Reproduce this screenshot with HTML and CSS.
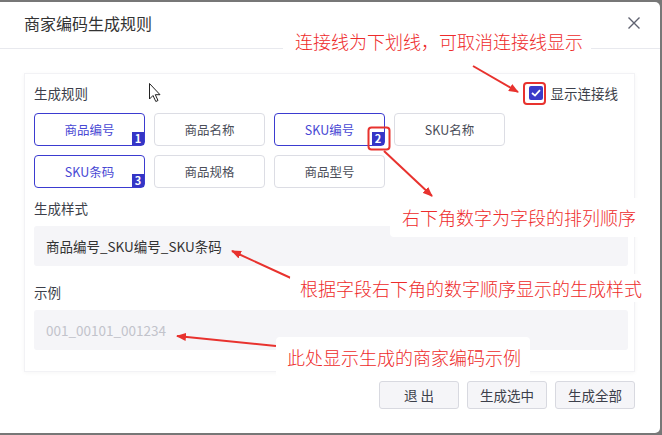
FILE: index.html
```html
<!DOCTYPE html>
<html lang="zh-CN">
<head>
    <meta charset="UTF-8">
    <meta name="viewport" content="width=device-width, initial-scale=1.0">
    <title>商家编码生成规则</title>
    <link rel="stylesheet" href="styles.css">
</head>
<body>

<div class="page">
    <div class="dialog">
        <div class="dialog-header">
            <span class="dialog-title">商家编码生成规则</span>
            <svg class="close-icon" width="14" height="14" viewBox="0 0 14 14">
                <path d="M1.5 1.5 L12.5 12.5 M12.5 1.5 L1.5 12.5" stroke="#5f6270" stroke-width="1.4" fill="none"/>
            </svg>
        </div>

        <div class="dialog-body">
            <div class="panel">
                <div class="rule-head">
                    <span class="section-label">生成规则</span>
                    <label class="check">
                        <span class="check-box">
                            <svg width="10" height="8" viewBox="0 0 10 8">
                                <path d="M1 4 L4 6.6 L9 1.2" stroke="#fff" stroke-width="1.8" fill="none"/>
                            </svg>
                        </span>
                        显示连接线
                    </label>
                </div>

                <div class="field-grid">
                    <div class="field-btn active">商品编号<span class="order">1</span></div>
                    <div class="field-btn">商品名称</div>
                    <div class="field-btn active">SKU编号<span class="order">2</span></div>
                    <div class="field-btn">SKU名称</div>
                    <div class="field-btn active">SKU条码<span class="order">3</span></div>
                    <div class="field-btn">商品规格</div>
                    <div class="field-btn">商品型号</div>
                </div>

                <div class="section-label spaced">生成样式</div>
                <div class="output-box">商品编号_SKU编号_SKU条码</div>

                <div class="section-label spaced">示例</div>
                <div class="output-box placeholder">001_00101_001234</div>
            </div>

            <div class="footer">
                <button class="btn">退 出</button>
                <button class="btn">生成选中</button>
                <button class="btn">生成全部</button>
            </div>
        </div>
    </div>

    <!-- notes drawn over the dialog -->
    <svg class="marks" width="662" height="435" viewBox="0 0 662 435">
        <defs>
            <marker id="head" markerWidth="10" markerHeight="8" refX="9" refY="4" orient="auto" markerUnits="userSpaceOnUse">
                <path d="M0 0 L10 4 L0 8 Z" fill="#e8322e"/>
            </marker>
        </defs>
        <rect x="524" y="83" width="21" height="21" rx="3" fill="none" stroke="#e8322e" stroke-width="2"/>
        <rect x="368.5" y="127.5" width="21" height="22" rx="3" fill="none" stroke="#e8322e" stroke-width="2"/>
        <line x1="473" y1="66" x2="518" y2="92" stroke="#e8322e" stroke-width="2" marker-end="url(#head)"/>
        <line x1="384" y1="151" x2="432" y2="196" stroke="#e8322e" stroke-width="2" marker-end="url(#head)"/>
        <line x1="293" y1="279" x2="232" y2="251" stroke="#e8322e" stroke-width="2" marker-end="url(#head)"/>
        <line x1="276" y1="346" x2="177" y2="336" stroke="#e8322e" stroke-width="2" marker-end="url(#head)"/>
        <!-- mouse pointer -->
        <path d="M149.5 83.5 L149.5 99 L153 95.5 L155.8 101.5 L158 100.5 L155.3 94.7 L160 94.7 Z" fill="#fff" stroke="#222" stroke-width="1"/>
    </svg>

    <div class="note note-link">连接线为下划线，可取消连接线显示</div>
    <div class="note note-order">右下角数字为字段的排列顺序</div>
    <div class="note note-style">根据字段右下角的数字顺序显示的生成样式</div>
    <div class="note note-sample">此处显示生成的商家编码示例</div>
</div>

</body>
</html>
```

FILE: styles.css
```css
/* Basic Reset */
* {
    margin: 0;
    padding: 0;
    box-sizing: border-box;
}

body {
    font-family: "Noto Sans CJK SC", "Noto Sans", sans-serif;
    background: #777;
    color: #333;
}

.page {
    position: relative;
    width: 662px;
    height: 435px;
    overflow: hidden;
}

/* Dialog */
.dialog {
    margin-top: 2px;
    width: 660px;
    height: 431px;
    background: #fff;
    border-radius: 0 5px 5px 0;
}

.dialog-header {
    height: 47px;
    display: flex;
    align-items: center;
    justify-content: space-between;
    padding: 0 19px 4px 24px;
    border-bottom: 1px solid #e8e9ee;
}

.dialog-title {
    font-size: 16px;
    color: #333;
}

.dialog-body {
    padding: 24px 24px 0 24px;
}

.panel {
    width: 611px;
    height: 299px;
    padding: 9px 16px 0 9px;
    background: #fff;
    border: 1px solid #f2f2f5;
    box-shadow: 0 1px 4px rgba(0, 0, 0, 0.04);
}

.rule-head {
    display: flex;
    justify-content: space-between;
    align-items: center;
    height: 20px;
    margin-bottom: 10px;
}

.section-label {
    font-size: 13.5px;
    line-height: 20px;
    color: #3c3f4a;
}

.section-label.spaced {
    margin-bottom: 8px;
}

/* Checkbox */
.check {
    display: flex;
    align-items: center;
    gap: 8px;
    font-size: 13.5px;
    color: #3c3f4a;
}

.check-box {
    width: 14px;
    height: 14px;
    border-radius: 2px;
    background: #3b3bc9;
    display: flex;
    align-items: center;
    justify-content: center;
}

/* Field buttons */
.field-grid {
    display: grid;
    grid-template-columns: repeat(4, 111px);
    grid-auto-rows: 33px;
    gap: 9px;
    margin-bottom: 10px;
}

.field-btn {
    position: relative;
    display: flex;
    align-items: center;
    justify-content: center;
    border: 1px solid #dcdde4;
    border-radius: 4px;
    font-size: 12.5px;
    color: #4a4d58;
}

.field-btn.active {
    border-color: #3b3bd0;
    color: #4848d4;
}

.order {
    position: absolute;
    right: 0;
    bottom: 0;
    width: 12px;
    height: 13px;
    background: #3535c6;
    color: #fff;
    font-size: 11px;
    font-weight: bold;
    line-height: 13px;
    text-align: center;
}

/* Output boxes */
.output-box {
    width: 594px;
    height: 40px;
    margin-bottom: 16px;
    padding-left: 12px;
    display: flex;
    align-items: center;
    background: #f5f5f8;
    border-radius: 3px;
    font-size: 13.5px;
    color: #333;
}

.output-box.placeholder {
    color: #c2c3cb;
}

/* Footer buttons */
.footer {
    display: flex;
    justify-content: flex-end;
    gap: 8px;
    padding-top: 9px;
    padding-right: 1px;
}

.btn {
    width: 80px;
    height: 28px;
    font-family: inherit;
    font-size: 13.5px;
    color: #3c3f4a;
    background: #f5f5f8;
    border: 1px solid #d8d9e0;
    border-radius: 3px;
}

/* Notes */
.marks {
    position: absolute;
    left: 0;
    top: 0;
}

.note {
    position: absolute;
    background: #fff;
    color: #ee2b2b;
    font-size: 18px;
    font-weight: 300;
    line-height: 24px;
    border-radius: 4px;
    white-space: nowrap;
}

.note-link {
    left: 283px;
    top: 29px;
    width: 308px;
    padding: 0 12px;
}

.note-order {
    left: 390px;
    top: 198px;
    width: 252px;
    height: 39px;
    padding: 7px 12px;
}

.note-style {
    left: 290px;
    top: 274px;
    padding: 2px 10px;
}

.note-sample {
    left: 276px;
    top: 337px;
    width: 254px;
    height: 40px;
    padding: 8px 11px;
}
```
